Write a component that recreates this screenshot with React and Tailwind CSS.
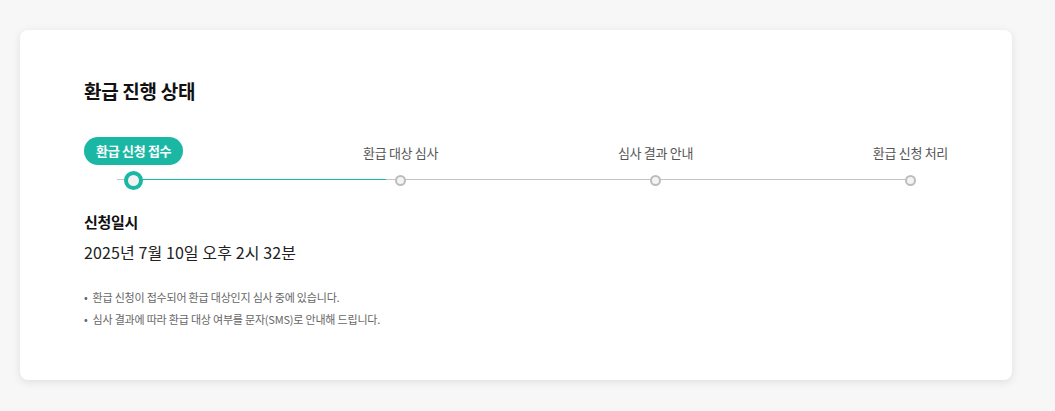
const steps = ["환급 신청 접수", "환급 대상 심사", "심사 결과 안내", "환급 신청 처리"];

const font = { fontFamily: '"Noto Sans CJK KR", "Noto Sans", sans-serif' };

export default function App() {
  const current = 0;

  return (
    <div className="min-h-screen bg-[#f7f7f7] pt-[30px] pl-[20px]" style={font}>
      <div className="w-[992px] rounded-[8px] bg-white px-[64px] pt-[47px] pb-[50px] shadow-[0_2px_8px_rgba(0,0,0,0.1)]">
        <h2 className="text-[19px] leading-[28px] font-bold text-[#111] tracking-[-0.3px]">
          환급 진행 상태
        </h2>

        {/* Steps */}
        <div className="relative mt-[32px] flex justify-between">
          {/* track */}
          <div className="absolute left-[33px] right-[38px] top-[42px] flex">
            <div className="w-[16px] border-t border-[#c4c4c4]" />
            <div className="w-[253px] border-t border-[#17b9a5]" />
            <div className="flex-1 border-t border-[#c4c4c4]" />
          </div>
          {steps.map((label, i) => (
            <div key={label} className="relative flex flex-col items-center">
              <div className="flex h-[28px] items-center">
                {i === current ? (
                  <span className="rounded-full bg-[#1ab8a4] px-[12px] text-[13px] leading-[28px] font-bold text-white tracking-[-0.3px]">
                    {label}
                  </span>
                ) : (
                  <span className="pt-[3px] text-[13px] leading-[20px] text-[#555] tracking-[-0.3px]">
                    {label}
                  </span>
                )}
              </div>
              <div className="mt-[6px] flex h-[18px] items-center justify-center">
                {i === current ? (
                  <span className="block h-[19px] w-[19px] rounded-full border-[4px] border-[#1ab8a4] bg-[#f2f2f2]" />
                ) : (
                  <span className="block h-[11px] w-[11px] rounded-full border-[2px] border-[#bdbdbd] bg-[#f4f4f4]" />
                )}
              </div>
            </div>
          ))}
        </div>

        {/* Date */}
        <h3 className="mt-[22px] text-[15px] leading-[22px] font-bold text-[#111] tracking-[-0.3px]">
          신청일시
        </h3>
        <p className="mt-[7px] text-[16px] leading-[24px] text-[#222] tracking-[0.1px]">
          2025년 7월 10일 오후 2시 32분
        </p>

        <ul className="mt-[22px] text-[11px] leading-[22px] text-[#666] tracking-[-0.2px]">
          <li className="flex gap-[5px]">
            <span>•</span>
            <span>환급 신청이 접수되어 환급 대상인지 심사 중에 있습니다.</span>
          </li>
          <li className="flex gap-[5px]">
            <span>•</span>
            <span>심사 결과에 따라 환급 대상 여부를 문자(SMS)로 안내해 드립니다.</span>
          </li>
        </ul>
      </div>
    </div>
  );
}
